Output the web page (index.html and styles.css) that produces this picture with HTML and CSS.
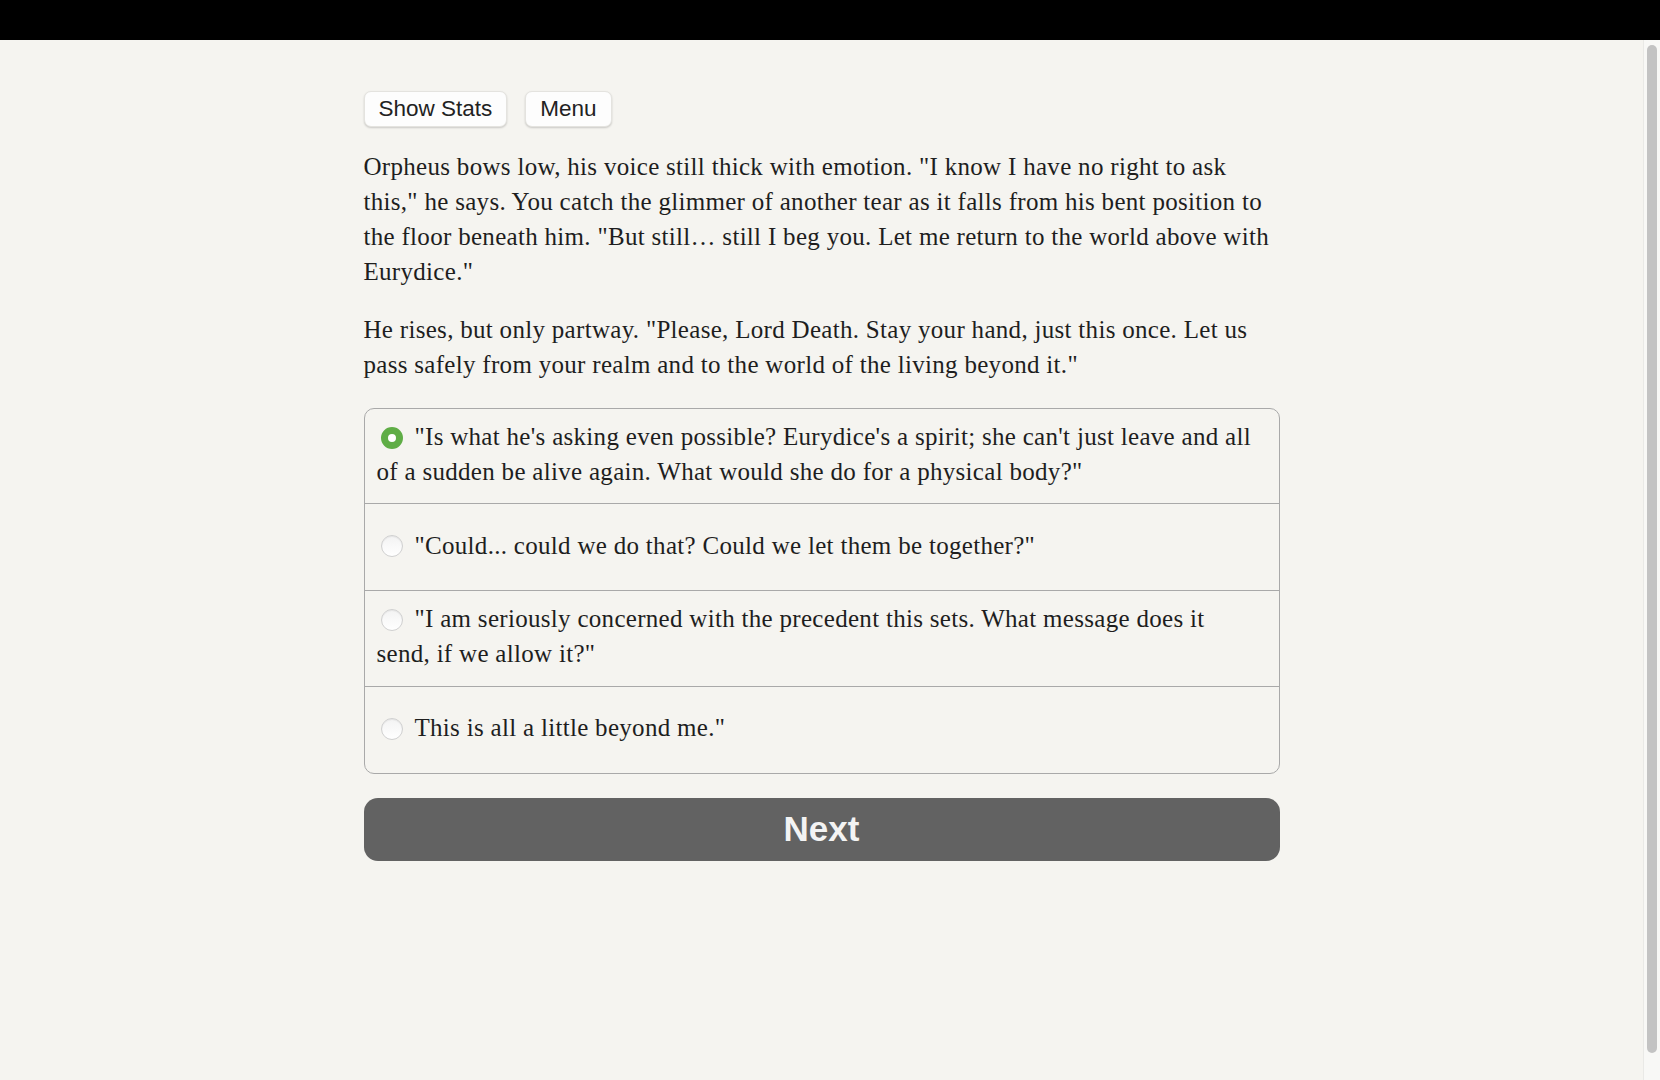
FILE: index.html
```html
<!DOCTYPE html>
<html lang="en">
<head>
<meta charset="utf-8">
<title>Story</title>
<link rel="stylesheet" href="styles.css">
</head>
<body>
<div class="topbar"></div>
<div class="viewport">
  <main class="main">
    <div class="page">
      <div class="toolbar">
        <button class="tool-btn" type="button">Show Stats</button>
        <button class="tool-btn" type="button">Menu</button>
      </div>
      <div class="story">
        <p>Orpheus bows low, his voice still thick with emotion. "I know I have no right to ask this," he says. You catch the glimmer of another tear as it falls from his bent position to the floor beneath him. "But still… still I beg you. Let me return to the world above with Eurydice."</p>
        <p>He rises, but only partway. "Please, Lord Death. Stay your hand, just this once. Let us pass safely from your realm and to the world of the living beyond it."</p>
      </div>
      <div class="choices">
        <label class="choice"><span class="choice-text"><input class="radio" type="radio" name="choice" checked>"Is what he's asking even possible? Eurydice's a spirit; she can't just leave and all of a sudden be alive again. What would she do for a physical body?"</span></label>
        <label class="choice"><span class="choice-text"><input class="radio" type="radio" name="choice">"Could... could we do that? Could we let them be together?"</span></label>
        <label class="choice"><span class="choice-text"><input class="radio" type="radio" name="choice">"I am seriously concerned with the precedent this sets. What message does it send, if we allow it?"</span></label>
        <label class="choice"><span class="choice-text"><input class="radio" type="radio" name="choice">This is all a little beyond me."</span></label>
      </div>
      <button class="next-btn" type="button">Next</button>
    </div>
  </main>
  <div class="scrollbar"><div class="scroll-thumb"></div></div>
</div>
</body>
</html>
```
FILE: styles.css
```css
html, body {
  margin: 0;
  padding: 0;
  height: 100%;
}
body {
  display: flex;
  flex-direction: column;
  overflow: hidden;
  background: #f5f4f0;
  color: #1e1e1e;
  font-family: "Liberation Serif", "Times New Roman", serif;
}
.topbar {
  height: 40px;
  flex: 0 0 40px;
  background: #000;
}
.viewport {
  flex: 1;
  display: flex;
  min-height: 0;
}
.main {
  flex: 1;
  min-width: 0;
}
.page {
  max-width: 916px;
  margin: 0 auto;
  padding-top: 51px;
}
.toolbar {
  display: flex;
  gap: 18px;
}
.tool-btn {
  height: 36px;
  padding: 0 14px;
  background: #fdfdfd;
  border: 1px solid #e4e3df;
  border-radius: 7px;
  box-shadow: 0 1px 2px rgba(0, 0, 0, 0.18);
  font-family: "Liberation Sans", Arial, sans-serif;
  font-size: 22.5px;
  color: #222;
  line-height: 1;
}
.story {
  margin: 22px 0 26px;
}
.story p {
  margin: 0;
  font-size: 25px;
  line-height: 35px;
  letter-spacing: 0.3px;
}
.story p + p {
  margin-top: 23px;
}
.choices {
  border: 1px solid #a9a9a9;
  border-radius: 10px;
  overflow: hidden;
}
.choice {
  display: flex;
  flex-direction: column;
  justify-content: center;
  box-sizing: border-box;
  min-height: 87px;
  padding: 10px 22px 14.4px 12px;
  font-size: 25px;
  line-height: 35px;
  letter-spacing: 0.3px;
}
.choice + .choice {
  border-top: 1px solid #a9a9a9;
}
.radio {
  appearance: none;
  -webkit-appearance: none;
  display: inline-block;
  vertical-align: middle;
  box-sizing: border-box;
  width: 22px;
  height: 22px;
  margin: -3px 12px 0 4px;
  border-radius: 50%;
  border: 1px solid #d0d0d0;
  background: linear-gradient(#f3f3f3, #ffffff);
  box-shadow: inset 0 1px 1px rgba(0, 0, 0, 0.06);
}
.radio:checked {
  border: 7px solid #5fad46;
  background: #fff;
  box-shadow: none;
}
.next-btn {
  display: block;
  width: 100%;
  height: 63px;
  margin-top: 24px;
  background: #626262;
  border: none;
  border-radius: 14px;
  color: #f3f3f3;
  font-family: "Liberation Sans", Arial, sans-serif;
  font-weight: bold;
  font-size: 35px;
}
.scrollbar {
  flex: 0 0 17px;
  width: 17px;
  box-sizing: border-box;
  background: #f8f8f6;
  border-left: 1px solid #e9e9e6;
  padding: 5px 3px 27px 3px;
  display: flex;
}
.scroll-thumb {
  flex: 1;
  background: #c3c3c3;
  border-radius: 6px;
}
```
